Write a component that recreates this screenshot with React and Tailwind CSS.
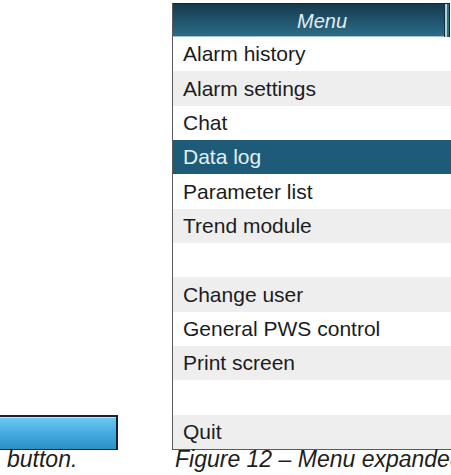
import React from 'react';

const items = [
  { label: 'Alarm history' },
  { label: 'Alarm settings' },
  { label: 'Chat' },
  { label: 'Data log', selected: true },
  { label: 'Parameter list' },
  { label: 'Trend module' },
  { label: '' },
  { label: 'Change user' },
  { label: 'General PWS control' },
  { label: 'Print screen' },
  { label: '' },
  { label: 'Quit' },
];

const MenuRow = ({ label, selected, index }) => {
  const bg = selected ? 'bg-[#1d5b78] text-[#e3f0f6]' : index % 2 === 1 ? 'bg-[#eeeeee] text-[#1c1c1c]' : 'bg-white text-[#1c1c1c]';
  return (
    <div className={`flex-1 flex items-center pl-[10px] text-[21px] whitespace-nowrap ${bg}`}>
      {label}
    </div>
  );
};

export default function App() {
  return (
    <div className="w-[451px] h-[475px] overflow-hidden bg-white flex font-['Liberation_Sans',Arial,sans-serif]">
      {/* left column: tail of the previous figure */}
      <div className="w-[172px] shrink-0 flex flex-col pt-[415px]">
        <div className="w-[118px] h-[35px] border-t-2 border-r-2 border-b border-[#18232e] bg-gradient-to-b from-[#6cc8f0] via-[#45ace0] to-[#2a8fc5] shadow-[inset_0_1px_0_#b9e4f7]" />
        <p className="pl-[7px] italic text-[23px] leading-[18px] text-[#1e1e1e]">button.</p>
      </div>

      {/* expanded menu */}
      <div className="w-[300px] shrink-0 flex flex-col pt-[3px]">
        <div className="flex flex-col border-l border-b border-[#5a5a5a]">
          <div className="w-[277px] h-[34px] flex border-t border-r border-[#0e2a38] bg-gradient-to-b from-[#163b4e] to-[#2c6e8a] shadow-[inset_0_-1px_0_#a3c0cb]">
            <div className="flex-1 flex items-center pl-[124px] italic text-[20px] text-[#e2edf2]">Menu</div>
            <div className="w-px bg-[#10303f]" />
            <div className="w-[2px] bg-[#b3d2da]" />
            <div className="w-[2px] bg-[#2d6f88]" />
          </div>
          <div className="h-[412px] flex flex-col">
            {items.map((item, i) => (
              <MenuRow key={i} index={i} {...item} />
            ))}
          </div>
        </div>
        <p className="pl-[3px] italic text-[23px] leading-[18px] text-[#1e1e1e] whitespace-nowrap">Figure 12 – Menu expanded</p>
      </div>
    </div>
  );
}
